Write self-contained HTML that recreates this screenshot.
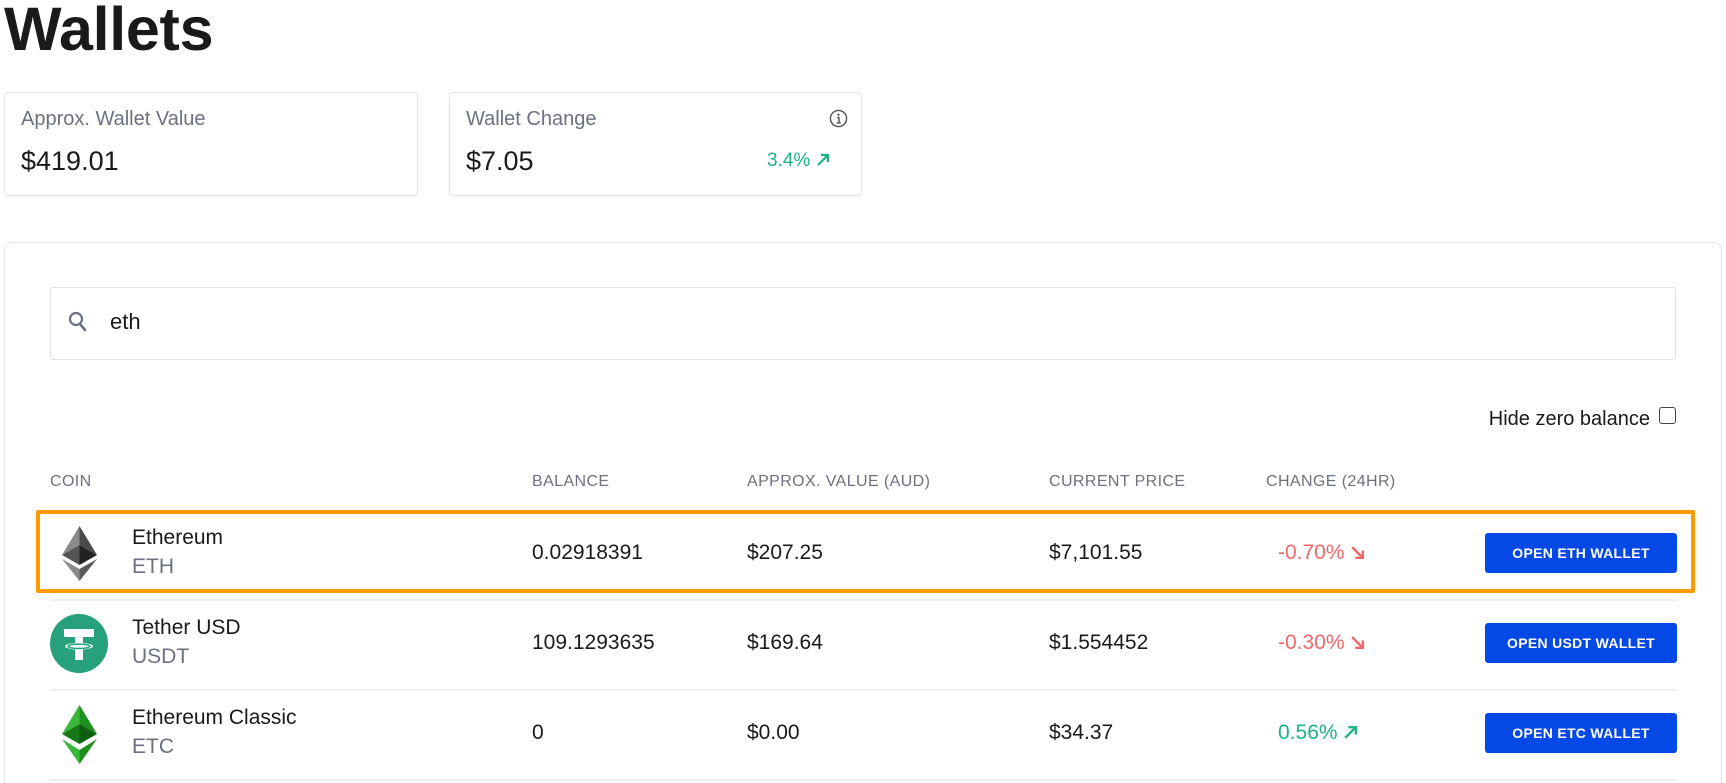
<!DOCTYPE html>
<html><head><meta charset="utf-8"><style>
*{margin:0;padding:0;box-sizing:border-box}
html,body{width:1726px;height:783px;overflow:hidden}
body{background:#fff;font-family:"Liberation Sans",sans-serif;color:#1a1a1a;position:relative}
.a{position:absolute;white-space:nowrap}
.card{position:absolute;border:1px solid #e3e5e8;border-radius:4px;box-shadow:0 1px 2px rgba(0,0,0,.06)}
.lbl{color:#6b7180;font-size:20px}
.hd{color:#6b7180;font-size:16px;letter-spacing:.4px;top:473px}
.sep{position:absolute;left:50px;width:1627px;height:2px;background:#eceef0}
.nm{font-size:21px;left:132px}
.tk{font-size:21px;color:#6b7180;left:132px}
.cell{font-size:21px}
.btn{position:absolute;left:1485px;width:192px;height:40px;background:#0448e6;border-radius:3px;color:#fff;font-size:14px;font-weight:bold;letter-spacing:.3px;display:flex;align-items:center;justify-content:center}
.red{color:#f0686a}.grn{color:#1db483}
</style></head><body>
<div class="a" style="left:4px;top:-6px;font-size:61px;font-weight:bold;letter-spacing:-0.3px">Wallets</div>

<div class="card" style="left:4px;top:92px;width:414px;height:104px"></div>
<div class="a lbl" style="left:21px;top:108px">Approx. Wallet Value</div>
<div class="a" style="left:21px;top:146px;font-size:27px">$419.01</div>

<div class="card" style="left:449px;top:92px;width:413px;height:104px"></div>
<div class="a lbl" style="left:466px;top:108px">Wallet Change</div>
<svg class="a" style="left:829px;top:109px" width="19" height="19" viewBox="0 0 20 20"><circle cx="10" cy="10" r="8.5" fill="none" stroke="#555" stroke-width="1.5"/><circle cx="10" cy="6" r="1.2" fill="#555"/><path d="M8.5 9h2v5.5M8 14.5h4.5" fill="none" stroke="#555" stroke-width="1.5"/></svg>
<div class="a" style="left:466px;top:146px;font-size:27px">$7.05</div>
<div class="a grn" style="left:767px;top:150px;font-size:19px">3.4% <svg width="14" height="14" viewBox="0 0 14 14" style="vertical-align:-1px"><path d="M2 12L12 2M5 2h7v7" fill="none" stroke="#1db483" stroke-width="2.2"/></svg></div>

<div class="card" style="left:4px;top:242px;width:1718px;height:560px;border-radius:8px;border-bottom:none"></div>
<div class="a" style="left:50px;top:287px;width:1626px;height:73px;border:1px solid #dfe1e5;border-radius:3px"></div>
<svg class="a" style="left:68px;top:310px" width="20" height="24" viewBox="0 0 20 24"><circle cx="8" cy="9" r="6" fill="none" stroke="#6b7180" stroke-width="2.2"/><path d="M12 14l5 6" stroke="#6b7180" stroke-width="2.6" stroke-linecap="round"/></svg>
<div class="a" style="left:110px;top:309px;font-size:22px">eth</div>

<div class="a" style="right:76px;top:408px;font-size:20px">Hide zero balance</div>
<div class="a" style="left:1659px;top:407px;width:17px;height:17px;border:1.5px solid #444;border-radius:3px"></div>

<div class="a hd" style="left:50px">COIN</div>
<div class="a hd" style="left:532px">BALANCE</div>
<div class="a hd" style="left:747px">APPROX. VALUE (AUD)</div>
<div class="a hd" style="left:1049px">CURRENT PRICE</div>
<div class="a hd" style="left:1266px">CHANGE (24HR)</div>

<div class="sep" style="top:599px"></div>
<div class="sep" style="top:689px"></div>
<div class="sep" style="top:779px"></div>

<!-- row1 -->
<svg class="a" style="left:62px;top:526px" width="35" height="55" viewBox="0 0 35 55"><polygon points="17.5,0 0,29 17.5,19" fill="#8a8a8a"/><polygon points="17.5,0 35,29 17.5,19" fill="#4a4a4a"/><polygon points="0,29 17.5,39 17.5,19" fill="#555"/><polygon points="35,29 17.5,39 17.5,19" fill="#222"/><polygon points="0,33 17.5,55 17.5,43" fill="#8a8a8a"/><polygon points="35,33 17.5,55 17.5,43" fill="#5a5a5a"/></svg>
<div class="a nm" style="top:526px">Ethereum</div>
<div class="a tk" style="top:555px">ETH</div>
<div class="a cell" style="left:532px;top:541px">0.02918391</div>
<div class="a cell" style="left:747px;top:541px">$207.25</div>
<div class="a cell" style="left:1049px;top:541px">$7,101.55</div>
<div class="a cell red" style="left:1278px;top:541px">-0.70% <svg width="15" height="15" viewBox="0 0 14 14" style="vertical-align:-1px"><path d="M2 2L12 12M12 5v7H5" fill="none" stroke="#f0686a" stroke-width="2.2"/></svg></div>
<div class="btn" style="top:533px">OPEN ETH WALLET</div>

<!-- row2 -->
<svg class="a" style="left:50px;top:614px" width="58" height="59" viewBox="0 0 58 59"><ellipse cx="29" cy="29.5" rx="29" ry="29.5" fill="#26a17b"/><path d="M14 15h30v8H33v6c6 .5 10 1.8 10 3.3s-4 2.8-10 3.3V46h-8V35.6c-6-.5-10-1.8-10-3.3s4-2.8 10-3.3V23H14z" fill="#fff"/><ellipse cx="29" cy="32.3" rx="11" ry="2.2" fill="none" stroke="#26a17b" stroke-width="1.5"/></svg>
<div class="a nm" style="top:616px">Tether USD</div>
<div class="a tk" style="top:645px">USDT</div>
<div class="a cell" style="left:532px;top:631px">109.1293635</div>
<div class="a cell" style="left:747px;top:631px">$169.64</div>
<div class="a cell" style="left:1049px;top:631px">$1.554452</div>
<div class="a cell red" style="left:1278px;top:631px">-0.30% <svg width="15" height="15" viewBox="0 0 14 14" style="vertical-align:-1px"><path d="M2 2L12 12M12 5v7H5" fill="none" stroke="#f0686a" stroke-width="2.2"/></svg></div>
<div class="btn" style="top:623px">OPEN USDT WALLET</div>

<!-- row3 -->
<svg class="a" style="left:62px;top:705px" width="35" height="59" viewBox="0 0 35 59"><polygon points="17.5,0 0,29 17.5,19" fill="#3ab83a"/><polygon points="17.5,0 35,29 17.5,19" fill="#1e8e1e"/><polygon points="0,29 17.5,39 17.5,19" fill="#167916"/><polygon points="35,29 17.5,39 17.5,19" fill="#0b5e0b"/><polygon points="0,34 17.5,59 17.5,45" fill="#3ab83a"/><polygon points="35,34 17.5,59 17.5,45" fill="#1e8e1e"/></svg>
<div class="a nm" style="top:706px">Ethereum Classic</div>
<div class="a tk" style="top:735px">ETC</div>
<div class="a cell" style="left:532px;top:721px">0</div>
<div class="a cell" style="left:747px;top:721px">$0.00</div>
<div class="a cell" style="left:1049px;top:721px">$34.37</div>
<div class="a cell grn" style="left:1278px;top:721px">0.56% <svg width="15" height="15" viewBox="0 0 14 14" style="vertical-align:-1px"><path d="M2 12L12 2M5 2h7v7" fill="none" stroke="#1db483" stroke-width="2.2"/></svg></div>
<div class="btn" style="top:713px">OPEN ETC WALLET</div>

<div class="a" style="left:36px;top:510px;width:1659px;height:83px;border:4px solid #ff9a00;border-radius:2px"></div>
</body></html>
